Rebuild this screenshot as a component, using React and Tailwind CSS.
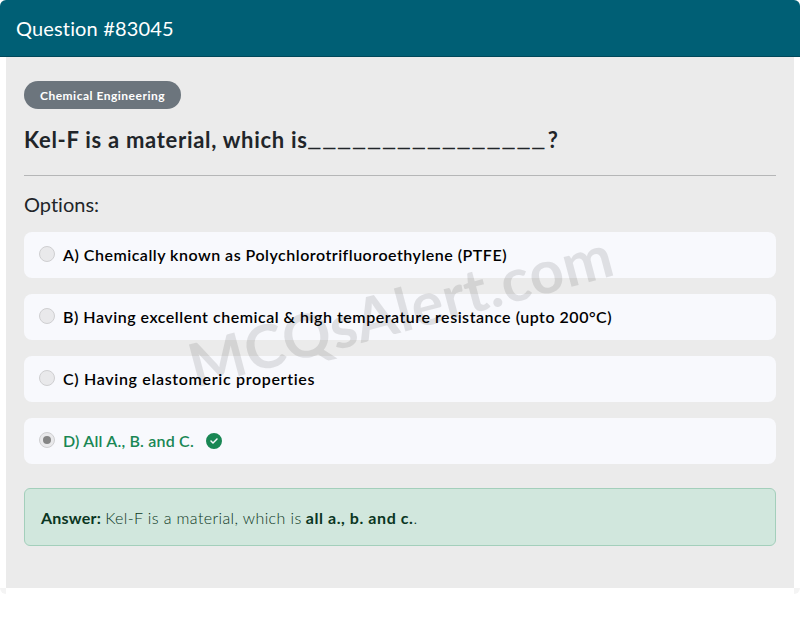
import React, { useState } from "react";
import { FaCircleCheck } from "react-icons/fa6";

const options = [
  { key: "A", text: "Chemically known as Polychlorotrifluoroethylene (PTFE)", tracking: "tracking-[0.5px]" },
  { key: "B", text: "Having excellent chemical & high temperature resistance (upto 200°C)", tracking: "tracking-[0.52px]" },
  { key: "C", text: "Having elastomeric properties", tracking: "tracking-[0.67px]" },
  { key: "D", text: "All A., B. and C.", tracking: "tracking-[0.2px]", correct: true },
];

const Option = ({ option, checked }) => (
  <label
    className={`flex h-[46px] items-center rounded-lg bg-[#f8f9fd] pl-[15px] text-base font-semibold ${
      option.correct ? "text-[#198754]" : "text-black"
    }`}
  >
    <span className="mb-[2px] flex size-4 items-center justify-center rounded-full border border-[#cfcfd1] bg-[#e9e9eb]">
      {checked && <span className="size-2 rounded-full bg-[#858585]" />}
    </span>
    <span className={`ml-2 whitespace-nowrap ${option.tracking}`}>
      {option.key}) {option.text}
    </span>
    {option.correct && <FaCircleCheck className="ml-3 size-4" />}
  </label>
);

const App = () => {
  const [selected] = useState("D");

  return (
    <div className="font-['Lato',sans-serif] h-[619px] overflow-hidden bg-white text-[#212529]">
      <header className="flex h-[57px] items-center rounded-t-md border-b border-[#00485a] bg-[#005f75] px-4">
        <h1 className="text-xl tracking-[0.15px] text-white">Question #83045</h1>
      </header>

      <main className="relative mx-[6px] h-[531px] bg-[#ebebeb] px-[18px] pt-6">
        <span className="flex h-7 w-[157px] items-center justify-center rounded-full bg-[#6c757d] pt-[2px] text-xs font-bold tracking-[0.5px] text-white">
          Chemical Engineering
        </span>

        <h2 className="mt-[15px] flex h-[30px] items-center whitespace-nowrap text-[22px] font-bold tracking-[0.71px]">
          <span>Kel-F is a material, which is</span>
          <span className="ml-px font-['Liberation_Sans',sans-serif] text-[20px] tracking-[3.82px] [-webkit-text-stroke:0.7px]">________________</span>
          <span>?</span>
        </h2>
        <hr className="mt-[21px] border-[#b5b6b7]" />

        <h3 className="mt-[14px] mb-[14px] flex h-7 items-center text-xl tracking-[0.01px]">Options:</h3>

        <div className="flex flex-col gap-4">
          {options.map((option) => (
            <Option key={option.key} option={option} checked={selected === option.key} />
          ))}
        </div>

        <div className="mt-6 flex h-[58px] items-center rounded-md border border-[#a3cfbb] bg-[#d1e7dd] px-4 pt-px text-base text-[#0a3622]">
          <p className="whitespace-nowrap">
            <strong className="tracking-[0.22px]">Answer:</strong>{" "}
            <span className="font-light tracking-[0.39px]">Kel-F is a material, which is</span>{" "}
            <strong className="tracking-[0.58px]">all a., b. and c.</strong>
            <span className="font-light">.</span>
          </p>
        </div>

        {/* watermark */}
        <div className="pointer-events-none absolute inset-x-0 top-[216px] flex justify-center">
          <span className="-rotate-15 text-[60px] leading-[72px] font-bold tracking-[0.5px] text-black/10">
            MCQsAlert.com
          </span>
        </div>
      </main>

      {/* card corners under the body */}
      <div className="flex justify-between">
        <span className="size-[6px] rounded-bl-full bg-[#f4f4f4]" />
        <span className="size-[6px] rounded-br-full bg-[#f4f4f4]" />
      </div>
    </div>
  );
};

export default App;
